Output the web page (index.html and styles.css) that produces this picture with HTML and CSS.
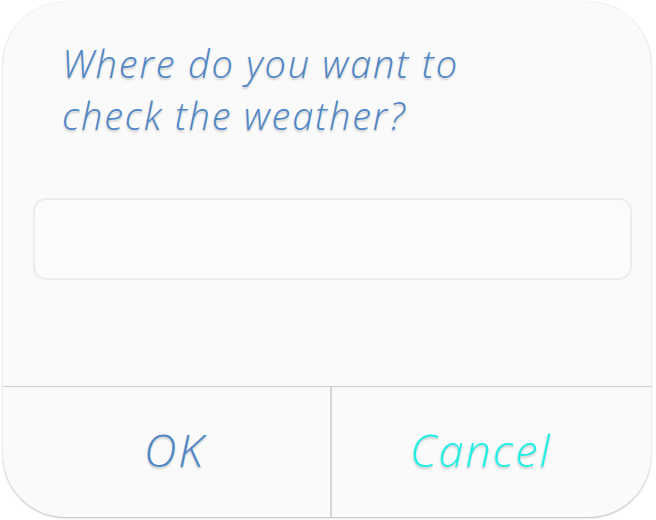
FILE: index.html
```html
<!DOCTYPE html>
<html>
<head>
<meta charset="utf-8">
<link rel="stylesheet" href="styles.css">
</head>
<body>
<div class="dialog">
  <div class="content">
    <h1 class="title">Where do you want to<br>check the weather?</h1>
    <div class="input"></div>
  </div>
  <div class="actions">
    <div class="btn ok">OK</div>
    <div class="btn cancel">Cancel</div>
  </div>
</div>
</body>
</html>
```
FILE: styles.css
```css
html, body {
  margin: 0;
  padding: 0;
  background: #ffffff;
}
body {
  width: 656px;
  height: 520px;
  padding: 2px 5px 3px 3px;
  box-sizing: border-box;
  font-family: "Open Sans", Lato, sans-serif;
  font-style: italic;
}
.dialog {
  height: 515px;
  background: #fafafa;
  border-radius: 62px;
  box-shadow: 0 1px 2px rgba(0,0,0,0.25), 0 0 1px rgba(0,0,0,0.12);
  display: flex;
  flex-direction: column;
  overflow: hidden;
}
.content {
  flex: 0 0 384px;
  padding: 0 19px 0 30px;
  display: flex;
  flex-direction: column;
}
.title {
  margin: 35px 0 0 29px;
  font-size: 38px;
  font-weight: 300;
  letter-spacing: 1.8px;
  line-height: 52px;
  color: #4f86c6;
  text-shadow: 0 2px 2px rgba(0,0,0,0.18);
}
.input {
  margin: 57px 0 0 0;
  height: 82px;
  box-sizing: border-box;
  border: 2px solid #ececec;
  border-radius: 13px;
  background: #fbfbfb;
}
.actions {
  flex: 1;
  display: grid;
  grid-template-columns: 329px 1fr;
  border-top: 1px solid #d2cccf;
}
.btn {
  display: flex;
  align-items: center;
  justify-content: center;
  font-size: 45px;
  font-weight: 300;
  letter-spacing: 2px;
  padding-bottom: 6px;
  text-shadow: 0 2px 2px rgba(0,0,0,0.18);
}
.ok {
  color: #4f86c6;
  padding-left: 16px;
  border-right: 2px solid #d6d6d6;
}
.cancel {
  color: #22f0e6;
  padding-right: 22px;
}
```
